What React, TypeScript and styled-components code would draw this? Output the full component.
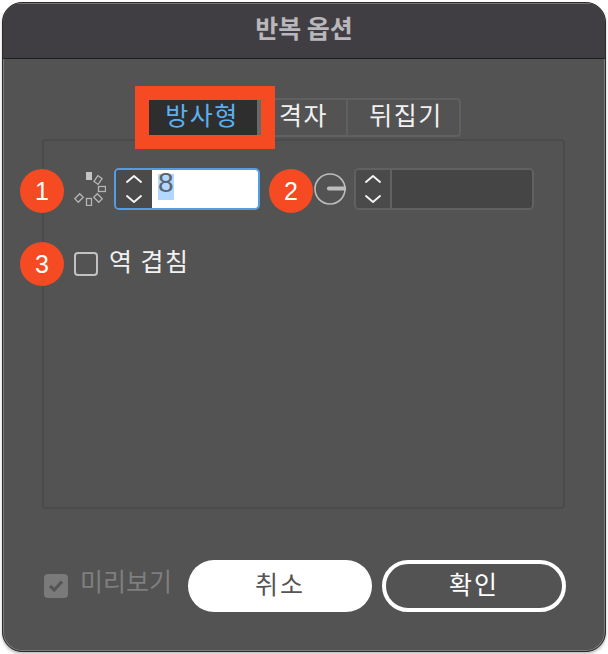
import React from "react";
import styled, { createGlobalStyle } from "styled-components";

const FONT = `"Noto Sans CJK KR", "Noto Sans", sans-serif`;

function Spinner() {
  return (
    <svg width="16" height="28" viewBox="0 0 16 28" fill="none" stroke="#f5f5f5" strokeWidth="1.9" strokeLinecap="round" strokeLinejoin="round">
      <path d="M1 7 L8 1 L15 7" />
      <path d="M1 21 L8 27 L15 21" />
    </svg>
  );
}

function RadialIcon() {
  const cells: [number, number, number][] = [
    [24, 8, 35],
    [28, 17, 90],
    [24, 26, 135],
    [15, 30, 0],
    [5, 26, 45],
  ];
  return (
    <svg width="32" height="34" viewBox="0 0 32 34" fill="none" stroke="#b5b5b5" strokeWidth="1.3">
      <rect x="12" y="0" width="6" height="8" fill="#c4c4c4" stroke="none" />
      <g>
        {cells.map(([x, y, r]) => (
          <rect key={`${x}-${y}`} x={x - 2.5} y={y - 3.5} width="5" height="7" transform={`rotate(${r} ${x} ${y})`} />
        ))}
      </g>
    </svg>
  );
}

function AngleIcon() {
  return (
    <svg width="32" height="32" viewBox="0 0 32 32" fill="none" stroke="#bdbdbd">
      <circle cx="16" cy="16" r="15" strokeWidth="1.6" />
      <path d="M15 15.5 H31" strokeWidth="4.2" strokeLinecap="round" />
    </svg>
  );
}

function App() {
  return (
    <>
      <GlobalStyle />
      <Dialog>
        <TitleBar>반복 옵션</TitleBar>
        <Tabs>
          <Tab $active>방사형</Tab>
          <Tab $width={87}>격자</Tab>
          <Tab $width={111} $shift={5}>뒤집기</Tab>
        </Tabs>
        <Panel>
          <ControlRow>
            <RadialIcon />
            <Stepper $focused $width={146}>
              <SpinnerBox $focused>
                <Spinner />
              </SpinnerBox>
              <NumberInput>
                <Selected>8</Selected>
              </NumberInput>
            </Stepper>
            <AngleSlot>
              <AngleIcon />
            </AngleSlot>
            <Stepper $width={180}>
              <SpinnerBox>
                <Spinner />
              </SpinnerBox>
              <EmptyInput />
            </Stepper>
          </ControlRow>
          <CheckRow>
            <Checkbox />
            <CheckLabel>역 겹침</CheckLabel>
          </CheckRow>
        </Panel>
        <Footer>
          <PreviewCheck>
            <svg width="16" height="14" viewBox="0 0 16 14" fill="none" stroke="#555" strokeWidth="3.2">
              <path d="M2 7 L6.2 11 L14 2.5" />
            </svg>
          </PreviewCheck>
          <PreviewLabel>미리보기</PreviewLabel>
          <Button>취소</Button>
          <Button $outlined>확인</Button>
        </Footer>
        <TabMarker />
        <Badge $left={17} $top={166}>1</Badge>
        <Badge $left={266} $top={166}>2</Badge>
        <Badge $left={17} $top={239}>3</Badge>
      </Dialog>
    </>
  );
}

const GlobalStyle = createGlobalStyle`
  html, body {
    margin: 0;
    background: #fff;
  }
`;

const Dialog = styled.div`
  position: relative;
  box-sizing: border-box;
  width: 604px;
  height: 650px;
  margin: 2px;
  display: flex;
  flex-direction: column;
  background: #535353;
  border: 1px solid #2b2b2b;
  border-radius: 20px;
  box-shadow: inset 0 0 0 1px #7c7c7c, 0 2px 3px rgba(0, 0, 0, 0.25);
  overflow: hidden;
  font-family: ${FONT};
`;

const TitleBar = styled.div`
  box-sizing: border-box;
  height: 56px;
  flex: none;
  display: flex;
  align-items: center;
  justify-content: center;
  padding-bottom: 7px;
  background: #403e42;
  border-bottom: 1px solid #1e1e1e;
  box-shadow: inset 0 1px 0 #77757a;
  color: #b9b7bb;
  font-size: 25px;
  font-weight: 700;
`;

const Tabs = styled.div`
  box-sizing: border-box;
  display: flex;
  flex: none;
  align-self: flex-start;
  height: 39px;
  margin: 39px 0 2px 144px;
  background: #535353;
  border: 2px solid #606060;
  border-radius: 4px;
`;

const Tab = styled.div<{ $active?: boolean; $width?: number; $shift?: number }>`
  box-sizing: border-box;
  width: ${p => (p.$active ? 112 : p.$width)}px;
  display: flex;
  align-items: center;
  justify-content: center;
  font-size: 25px;
  letter-spacing: 1.5px;
  line-height: 1;
  padding-bottom: 7px;
  padding-left: ${p => p.$shift ?? 0}px;
  padding-right: ${p => (p.$active ? 2 : 0)}px;
  color: ${p => (p.$active ? "#5cb0ef" : "#f1f1f1")};
  background: ${p => (p.$active ? "#2e2e2e" : "transparent")};
  border-right: ${p => (p.$active ? "4px solid #686868" : "2px solid #606060")};
  &:last-child {
    border-right: none;
  }
`;

const Panel = styled.div`
  box-sizing: border-box;
  flex: none;
  width: 523px;
  height: 370px;
  margin-left: 39px;
  padding: 27px 0 0 30px;
  background: #535353;
  border: 2px solid #4b4b4b;
  border-radius: 4px;
  display: flex;
  flex-direction: column;
  gap: 42px;
`;

const ControlRow = styled.div`
  display: flex;
  align-items: center;
  gap: 8px;
  height: 42px;
`;

const Stepper = styled.div<{ $focused?: boolean; $width: number }>`
  box-sizing: border-box;
  width: ${p => p.$width}px;
  height: 42px;
  display: flex;
  border: 2px solid ${p => (p.$focused ? "#4f9ee6" : "#616161")};
  border-radius: 5px;
  overflow: hidden;
`;

const SpinnerBox = styled.div<{ $focused?: boolean }>`
  flex: none;
  box-sizing: border-box;
  width: 36px;
  display: flex;
  align-items: center;
  justify-content: center;
  background: #4a4a4a;
  border-right: ${p => (p.$focused ? "none" : "2px solid #616161")};
`;

const NumberInput = styled.div`
  flex: 1;
  display: flex;
  align-items: flex-start;
  padding: 4px 0 0 6px;
  background: #fff;
  font-family: "Liberation Sans", sans-serif;
  font-size: 28px;
  color: #5a6470;
`;

const Selected = styled.span`
  display: block;
  height: 26px;
  line-height: 18px;
  background: #b3d7ff;
`;

const EmptyInput = styled.div`
  flex: 1;
  background: #454545;
`;

const AngleSlot = styled.div`
  display: flex;
  margin-left: 46px;
`;

const CheckRow = styled.div`
  display: flex;
  align-items: center;
  gap: 11px;
  height: 24px;
`;

const Checkbox = styled.div`
  box-sizing: border-box;
  width: 24px;
  height: 24px;
  border: 2px solid #c2c2c2;
  border-radius: 4px;
`;

const CheckLabel = styled.span`
  font-size: 25px;
  letter-spacing: 1.5px;
  line-height: 1;
  color: #f1f1f1;
  margin-top: -7px;
`;

const Footer = styled.div`
  display: flex;
  align-items: center;
  flex: none;
  height: 52px;
  margin-top: 51px;
  padding-left: 41px;
`;

const PreviewCheck = styled.div`
  box-sizing: border-box;
  width: 24px;
  height: 24px;
  display: flex;
  align-items: center;
  justify-content: center;
  background: #7a7a7a;
  border-radius: 4px;
`;

const PreviewLabel = styled.span`
  width: 108px;
  margin-left: 12px;
  font-size: 25px;
  line-height: 1;
  margin-top: -12px;
  color: #7f7f7f;
`;

const Button = styled.div<{ $outlined?: boolean }>`
  box-sizing: border-box;
  width: 184px;
  height: 52px;
  margin-right: 10px;
  display: flex;
  align-items: center;
  justify-content: center;
  border-radius: 26px;
  font-size: 25px;
  letter-spacing: 2px;
  line-height: 1;
  padding-bottom: 6px;
  color: ${p => (p.$outlined ? "#fff" : "#555")};
  background: ${p => (p.$outlined ? "transparent" : "#fff")};
  border: ${p => (p.$outlined ? "4px solid #fff" : "none")};
`;

const TabMarker = styled.div`
  position: absolute;
  left: 132px;
  top: 83px;
  width: 140px;
  height: 63px;
  box-sizing: border-box;
  border: 14px solid #f64a23;
`;

const Badge = styled.div<{ $left: number; $top: number }>`
  position: absolute;
  left: ${p => p.$left}px;
  top: ${p => p.$top}px;
  width: 44px;
  height: 44px;
  border-radius: 50%;
  background: #f64a23;
  color: #fff;
  display: flex;
  align-items: center;
  justify-content: center;
  font-family: "Liberation Sans", sans-serif;
  font-size: 25px;
`;

export default App;
